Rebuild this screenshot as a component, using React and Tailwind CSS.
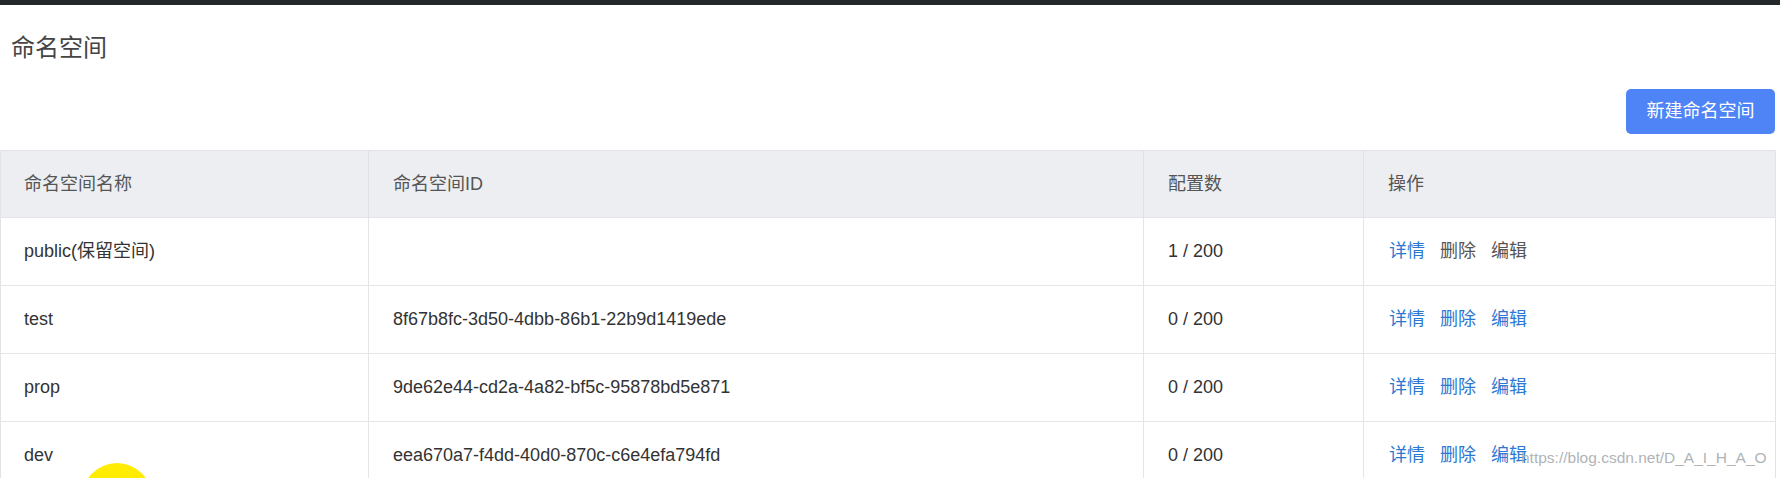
import React from "react";

const rows = [
  { name: "public(保留空间)", id: "", count: "1 / 200", reserved: true },
  { name: "test", id: "8f67b8fc-3d50-4dbb-86b1-22b9d1419ede", count: "0 / 200" },
  { name: "prop", id: "9de62e44-cd2a-4a82-bf5c-95878bd5e871", count: "0 / 200" },
  { name: "dev", id: "eea670a7-f4dd-40d0-870c-c6e4efa794fd", count: "0 / 200" },
];

const font = { fontFamily: '"Liberation Sans", Arial, "Noto Sans CJK SC", sans-serif' };

export default function App() {
  return (
    <div className="relative w-[1780px] h-[478px] overflow-hidden bg-white text-[#333]" style={font}>
      <div className="h-[5px] bg-[#23292b]" />
      <div className="pl-[11px] pt-[27px] text-[24px] leading-[32px] text-[#444]">命名空间</div>
      <div className="flex justify-end w-[1775px] mt-[25px]">
        <button className="h-[45px] w-[149px] rounded-[5px] bg-[#4f84f6] text-white text-[18px]">
          新建命名空间
        </button>
      </div>
      <div className="mt-[16px] w-[1776px] border-l border-r border-t border-[#e1e3e6] text-[18px]">
        <div className="grid grid-cols-[368px_775px_220px_1fr] h-[67px] bg-[#eceef1] border-b border-[#e1e3e6] text-[#555]">
          <div className="flex items-center pl-[23px] border-r border-[#dfe1e4]">命名空间名称</div>
          <div className="flex items-center pl-[24px] border-r border-[#dfe1e4]">命名空间ID</div>
          <div className="flex items-center pl-[24px] border-r border-[#dfe1e4]">配置数</div>
          <div className="flex items-center pl-[24px]">操作</div>
        </div>
        {rows.map((r) => (
          <div key={r.name} className="grid grid-cols-[368px_775px_220px_1fr] h-[68px] border-b border-[#e3e5e8] text-[#333]">
            <div className="flex items-center pl-[23px] border-r border-[#e3e5e8]">{r.name}</div>
            <div className="flex items-center pl-[24px] border-r border-[#e3e5e8]">{r.id}</div>
            <div className="flex items-center pl-[24px] border-r border-[#e3e5e8]">{r.count}</div>
            <div className="flex items-center pl-[25px] gap-[15px]">
              <span className="text-[#2d78d2]">详情</span>
              <span className={r.reserved ? "text-[#555]" : "text-[#2d78d2]"}>删除</span>
              <span className={r.reserved ? "text-[#555]" : "text-[#2d78d2]"}>编辑</span>
            </div>
          </div>
        ))}
      </div>
      <div className="absolute left-[1521px] top-[447px] whitespace-nowrap text-[15.5px] leading-[22px] text-[#b0b4b8]">
        https://blog.csdn.net/D_A_I_H_A_O
      </div>
      <div className="absolute left-[82px] top-[463px] w-[70px] h-[70px] rounded-full bg-[#ffec00]" />
    </div>
  );
}
